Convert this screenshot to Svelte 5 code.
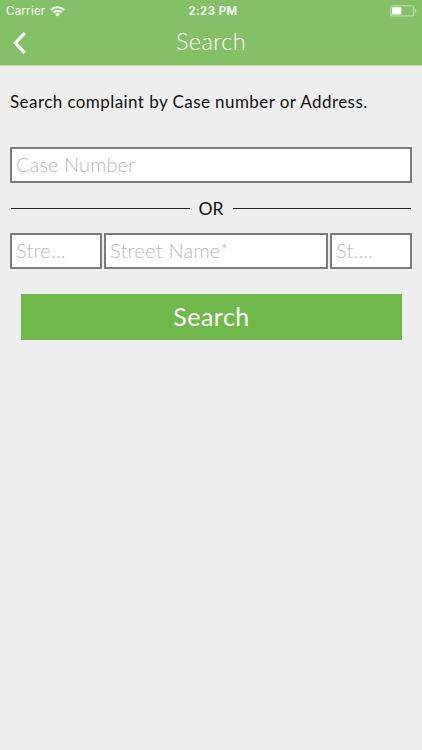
<script lang="ts">
  let caseNumber = '';
  let streetNumber = '';
  let streetName = '';
  let streetType = '';

  function handleSearch() {
    console.log({ caseNumber, streetNumber, streetName, streetType });
  }
</script>

<div class="screen">
  <header class="header">
    <div class="status-bar">
      <div class="carrier">
        <span class="carrier-name">Carrier</span>
        <svg class="wifi" width="15" height="11" viewBox="0 0 15 11" fill="none" stroke="white" stroke-width="2.1">
          <path d="M.9 3.9a9.4 9.4 0 0 1 13.2 0" />
          <path d="M3.3 6.5a5.9 5.9 0 0 1 8.4 0" />
          <path d="M7.5 10.6 5.1 8.3a3.4 3.4 0 0 1 4.8 0z" fill="white" stroke="none" />
        </svg>
      </div>
      <span class="time">2:23 PM</span>
      <div class="battery">
        <svg width="28" height="12" viewBox="0 0 28 12">
          <rect x="0.7" y="0.7" width="23" height="10.3" rx="2" fill="none" stroke="white" stroke-opacity="0.5" stroke-width="1.1" />
          <rect x="2.1" y="2.2" width="9.2" height="7.3" rx="0.5" fill="white" />
          <path d="M25.1 3.9c1.9.7 1.9 3.2 0 3.9z" fill="white" fill-opacity="0.5" />
        </svg>
      </div>
    </div>

    <div class="nav-bar">
      <button class="back-btn" aria-label="Back">
        <svg width="14" height="22" viewBox="0 0 14 22" fill="none" stroke="white" stroke-width="3.2">
          <path d="M11.8 1 2.4 11l9.4 10" />
        </svg>
      </button>
      <h1 class="title">Search</h1>
    </div>
  </header>

  <form class="search-form" on:submit|preventDefault={handleSearch}>
    <p class="intro">Search complaint by Case number or Address.</p>

    <input type="text" aria-label="Case Number" placeholder="Case Number" bind:value={caseNumber} />

    <div class="divider"><span>OR</span></div>

    <div class="address-row">
      <input type="text" aria-label="Street number" placeholder="Stre…" bind:value={streetNumber} />
      <input type="text" aria-label="Street name" placeholder="Street Name*" bind:value={streetName} />
      <input type="text" aria-label="Street type" placeholder="St.…" bind:value={streetType} />
    </div>

    <button type="submit" class="search-btn">Search</button>
  </form>
</div>

<style>
  :global(body) {
    background: #eeeeee;
  }

  .screen {
    min-height: 750px;
    background: #eeeeee;
    font-family: Lato, 'Open Sans', sans-serif;
    color: #111;
  }

  .header {
    height: 65px;
    background: #84c065;
    border-bottom: 1px solid #c5deb8;
    color: white;
  }

  .status-bar {
    display: grid;
    grid-template-columns: 1fr auto 1fr;
    align-items: center;
    height: 22px;
    padding: 0 4px 0 6px;
    font-family: Inter, 'Liberation Sans', sans-serif;
    font-size: 11.5px;
  }

  .carrier {
    display: flex;
    align-items: center;
    gap: 5px;
  }

  .carrier-name {
    letter-spacing: 0.25px;
  }

  .time {
    padding-left: 2px;
    font-weight: 600;
    letter-spacing: 0.4px;
  }

  .battery {
    display: flex;
    justify-content: flex-end;
  }

  .nav-bar {
    display: grid;
    grid-template-columns: 40px 1fr 40px;
    align-items: center;
    height: 42px;
  }

  .back-btn {
    display: flex;
    padding: 0 0 0 13px;
    border: none;
    background: none;
    cursor: pointer;
  }

  .title {
    margin: 0;
    padding-bottom: 4px;
    font-size: 23.5px;
    font-weight: 300;
    line-height: 38px;
    text-align: center;
    letter-spacing: 0.4px;
  }

  .search-form {
    display: flex;
    flex-direction: column;
    padding: 23px 10px 0;
  }

  .intro {
    margin: 0 0 32px;
    font-size: 17px;
    line-height: 26px;
    letter-spacing: 0.43px;
    white-space: nowrap;
  }

  input {
    box-sizing: border-box;
    width: 100%;
    min-width: 0;
    height: 36px;
    padding: 0 4px 3px;
    border: 2px solid #7b7b7b;
    border-radius: 0;
    background: white;
    font-family: inherit;
    font-size: 20px;
    font-weight: 300;
    letter-spacing: 0.1px;
    color: #111;
    outline: none;
  }

  input::placeholder {
    color: #b9b9bd;
    opacity: 1;
  }

  .divider {
    display: flex;
    align-items: center;
    gap: 9px;
    height: 50px;
    padding: 0 1px;
    font-size: 17.5px;
  }

  .divider::before,
  .divider::after {
    content: '';
    flex: 1;
    height: 1px;
    background: #222;
  }

  .address-row {
    display: grid;
    grid-template-columns: 92px 1fr 82px;
    gap: 2px;
  }

  .address-row input {
    letter-spacing: 0.25px;
  }

  .search-btn {
    height: 46px;
    margin: 25px 10px 0 11px;
    padding: 0 0 2px;
    border: none;
    background: #6fb84b;
    color: white;
    font-family: inherit;
    font-size: 25px;
    letter-spacing: 0.5px;
    cursor: pointer;
  }
</style>
